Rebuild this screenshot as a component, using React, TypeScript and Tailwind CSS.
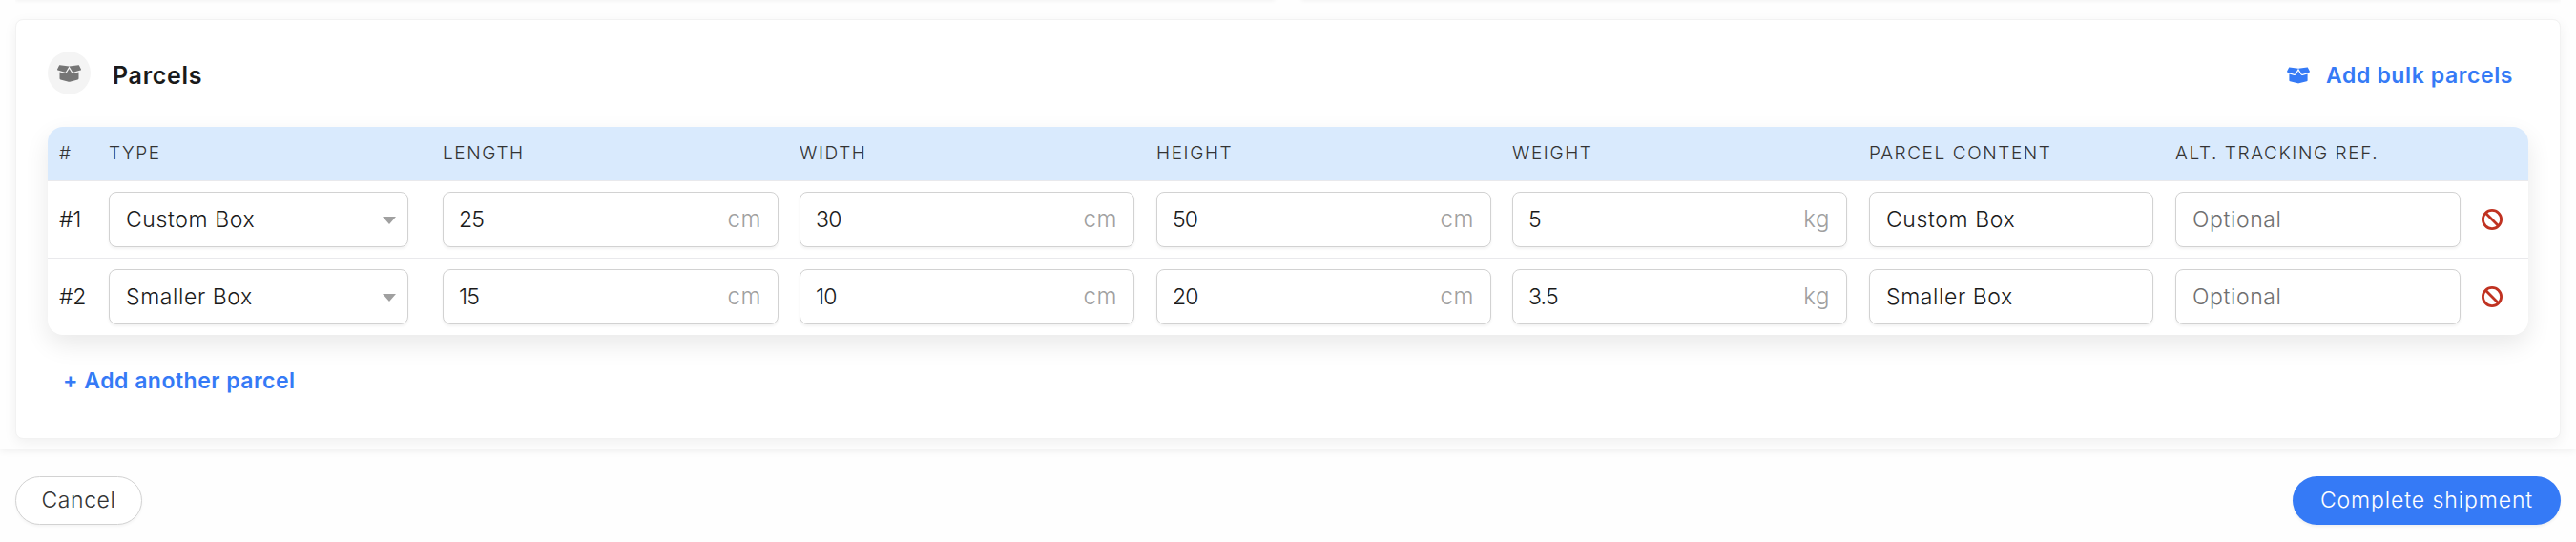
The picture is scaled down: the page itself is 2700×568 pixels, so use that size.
import type { ReactNode } from "react"
import { FaBoxOpen } from "react-icons/fa"

const COLUMNS =
    "grid grid-cols-[52px_350px_374px_374px_373px_374px_321px_321px_61px] pl-3"

const PARCELS = [
    { type: "Custom Box", length: "25", width: "30", height: "50", weight: "5" },
    { type: "Smaller Box", length: "15", width: "10", height: "20", weight: "3.5" },
]

const HEADINGS = [
    "#",
    "TYPE",
    "LENGTH",
    "WIDTH",
    "HEIGHT",
    "WEIGHT",
    "PARCEL CONTENT",
    "ALT. TRACKING REF.",
]

function Field({ width, children }: { width: string; children: ReactNode }) {
    return (
        <div
            className={`${width} flex h-[58px] items-center justify-between rounded-lg border border-[#d2d2d2] bg-white px-[17px] pb-px shadow-[0_2px_3px_rgba(0,0,0,0.05)]`}
        >
            {children}
        </div>
    )
}

function Measure({ value, unit, width = "w-[351px]" }: { value: string; unit: string; width?: string }) {
    return (
        <Field width={width}>
            <span className="-ml-px tracking-[-0.8px]">{value}</span>
            <span className="text-[24px] text-[#a0a0a0]">{unit}</span>
        </Field>
    )
}

function BanIcon() {
    return (
        <svg width="22" height="22" viewBox="0 0 22 22" fill="none" stroke="#c03221" strokeWidth="2.8">
            <circle cx="11" cy="11" r="9.6" />
            <path d="M4.3 4.3 17.7 17.7" />
        </svg>
    )
}

export default function App() {
    return (
        <div className="flex h-[568px] w-[2700px] flex-col overflow-hidden bg-[#fefefe] font-['Inter',sans-serif] text-[23px] leading-7 font-light tracking-[0.6px] text-[#1a1a1a]">
            <main className="relative z-10 h-[471px] shrink-0 bg-[#fefefe] pr-4 pl-4 shadow-[0_1px_8px_rgba(0,0,0,0.07)]">
                {/* Lower edge of the two cards above */}
                <div className="flex h-5 gap-7 overflow-hidden">
                    <div className="-mt-2 h-2 flex-1 shadow-[0_1px_4px_rgba(0,0,0,0.05)]" />
                    <div className="-mt-2 h-2 flex-1 shadow-[0_1px_4px_rgba(0,0,0,0.05)]" />
                </div>

                <section className="h-[440px] rounded-lg border border-[#f2f2f2] bg-white px-[33px] pt-[33px] shadow-[0_4px_14px_rgba(0,0,0,0.06)]">
                    <div className="flex h-[79px] items-start">
                        <div className="flex size-[45px] items-center justify-center rounded-full bg-[#f4f4f4]">
                            <FaBoxOpen className="h-5 w-[25px] text-[#757575]" />
                        </div>
                        <h2 className="mt-[11px] ml-[23px] text-[25px] font-semibold tracking-[0.7px]">Parcels</h2>
                        <button className="mt-[11px] mr-4 ml-auto flex items-center gap-[17px] font-semibold text-[#357af6]">
                            <FaBoxOpen className="h-5 w-6" />
                            <span>Add bulk parcels</span>
                        </button>
                    </div>

                    <div className="rounded-2xl bg-white shadow-[0_10px_26px_rgba(0,0,0,0.09)]">
                        <div
                            className={`${COLUMNS} h-14 items-center rounded-t-2xl bg-[#d9eafd] text-[19px] tracking-[1.6px] text-[#333]`}
                        >
                            {HEADINGS.map((heading) => (
                                <span key={heading}>{heading}</span>
                            ))}
                        </div>
                        {PARCELS.map((parcel, i) => (
                            <div key={parcel.type} className={`${COLUMNS} items-center border-t border-[#e9e9ec] py-[11px]`}>
                                <span className="pb-px tracking-[-0.4px]">#{i + 1}</span>
                                <Field width="w-[314px]">
                                    <span>{parcel.type}</span>
                                    <svg className="-mr-[5px] mt-0.5" width="14" height="8" viewBox="0 0 14 8" fill="#a0a0a0">
                                        <path d="M0 0h14L7 8z" />
                                    </svg>
                                </Field>
                                <Measure value={parcel.length} unit="cm" width="w-[352px]" />
                                <Measure value={parcel.width} unit="cm" />
                                <Measure value={parcel.height} unit="cm" />
                                <Measure value={parcel.weight} unit="kg" />
                                <Field width="w-[298px]">{parcel.type}</Field>
                                <Field width="w-[299px]">
                                    <span className="text-[#6f6f6f]">Optional</span>
                                </Field>
                                <BanIcon />
                            </div>
                        ))}
                    </div>

                    <button className="mt-[34px] ml-4 block font-semibold tracking-[0.5px] text-[#357af6]">
                        + Add another parcel
                    </button>
                </section>
            </main>

            <footer className="flex justify-between px-4 pt-7">
                <button className="h-[51px] w-[133px] rounded-full border border-[#d2d2d2] bg-white pb-px text-[#333] shadow-[0_2px_3px_rgba(0,0,0,0.04)]">
                    Cancel
                </button>
                <button className="h-[51px] w-[281px] rounded-full bg-[#357af6] pb-px tracking-[0.9px] text-white shadow-[0_2px_3px_rgba(0,0,0,0.06)]">
                    Complete shipment
                </button>
            </footer>
        </div>
    )
}
